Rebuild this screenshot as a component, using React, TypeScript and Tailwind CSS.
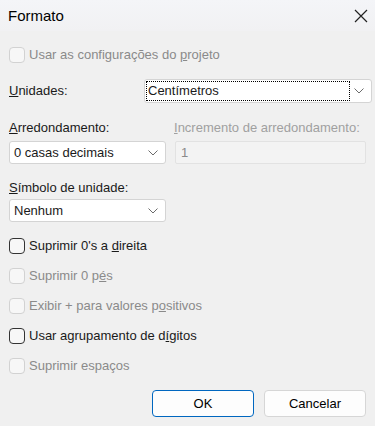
import React from "react";

function Chevron() {
  return (
    <svg width="10" height="6" viewBox="0 0 10 6" className="shrink-0">
      <path d="M0.5 0.5 L5 5 L9.5 0.5" fill="none" stroke="#6b6b6b" strokeWidth="1" />
    </svg>
  );
}

function Check({ label, disabled }: { label: React.ReactNode; disabled?: boolean }) {
  return (
    <div className="flex h-[16px] items-center gap-[4px]">
      <span
        className={`h-[16px] w-[16px] shrink-0 rounded-[4px] border bg-[#f7f7f7] ${
          disabled ? "border-[#d2d2d2]" : "border-[#333333]"
        }`}
      />
      <span className={disabled ? "text-[#8a8a8a]" : "text-[#1a1a1a]"}>{label}</span>
    </div>
  );
}

function Select({ value, className }: { value: string; className: string }) {
  return (
    <div
      className={`flex items-center justify-between rounded-[3px] border border-[#d4d4d4] bg-white pl-[3px] pr-[7px] ${className}`}
    >
      <span className="pl-[1px]">{value}</span>
      <Chevron />
    </div>
  );
}

export default function App() {
  return (
    <div
      className="h-[426px] w-[375px] overflow-hidden bg-[#f0f0f0] text-[13px] leading-[16px] text-[#1a1a1a]"
      style={{ fontFamily: '"Liberation Sans", Arial, sans-serif' }}
    >
      <div className="flex h-[31px] items-center justify-between bg-gradient-to-b from-[#f4f5f8] to-[#f1f1f3] pl-[8px] pr-[7px]">
        <span className="text-[15px] text-black">Formato</span>
        <svg width="14" height="14" viewBox="0 0 14 14">
          <path d="M1 1 L13 13 M13 1 L1 13" stroke="#222" strokeWidth="1.2" />
        </svg>
      </div>

      <div className="px-[9px]">
        <div className="mt-[16px]">
          <Check
            disabled
            label={
              <>
                Usar as configurações do <u>p</u>rojeto
              </>
            }
          />
        </div>

        <div className="mt-[16px] flex h-[24px] items-center justify-between">
          <span>
            <u>U</u>nidades:
          </span>
          <div className="-mr-[6px] flex h-[24px] w-[228px] items-center justify-between rounded-[3px] border border-[#d4d4d4] bg-white pl-[1px] pr-[7px]">
            <span className="flex h-[20px] w-[204px] items-center border border-dotted border-black pl-[1px]">
              Centímetros
            </span>
            <Chevron />
          </div>
        </div>

        <div className="mt-[17px] flex h-[16px] items-center">
          <div className="w-[165px]">
            <u>A</u>rredondamento:
          </div>
          <div className="whitespace-nowrap text-[#a0a0a0]">
            <u>I</u>ncremento de arredondamento:
          </div>
        </div>

        <div className="mt-[5px] flex gap-[9px]">
          <Select value="0 casas decimais" className="h-[23px] w-[157px]" />
          <div className="flex h-[23px] w-[191px] items-center rounded-[2px] border border-[#e2e2e2] bg-[#f3f3f3] pl-[5px] text-[#8a8a8a]">
            1
          </div>
        </div>

        <div className="mt-[16px] flex h-[16px] items-center">
          <u>S</u>ímbolo de unidade:
        </div>
        <div className="mt-[3px]">
          <Select value="Nenhum" className="h-[23px] w-[157px]" />
        </div>

        <div className="mt-[16px] flex flex-col gap-[14px]">
          <Check
            label={
              <>
                Suprimir 0's a <u>d</u>ireita
              </>
            }
          />
          <Check
            disabled
            label={
              <>
                Suprimir 0 p<u>é</u>s
              </>
            }
          />
          <Check
            disabled
            label={
              <>
                Exibir + para valores p<u>o</u>sitivos
              </>
            }
          />
          <Check
            label={
              <>
                Usar agrupamento de d<u>í</u>gitos
              </>
            }
          />
          <Check disabled label="Suprimir espaços" />
        </div>

        <div className="mt-[16px] flex justify-end gap-[10px]">
          <button className="h-[27px] w-[102px] rounded-[4px] border border-[#0067c0] bg-[#fdfdfd] text-[13px] text-black">
            OK
          </button>
          <button className="h-[27px] w-[102px] rounded-[4px] border border-[#d6d6d6] bg-[#fdfdfd] text-[13px] text-black">
            Cancelar
          </button>
        </div>
      </div>
    </div>
  );
}
